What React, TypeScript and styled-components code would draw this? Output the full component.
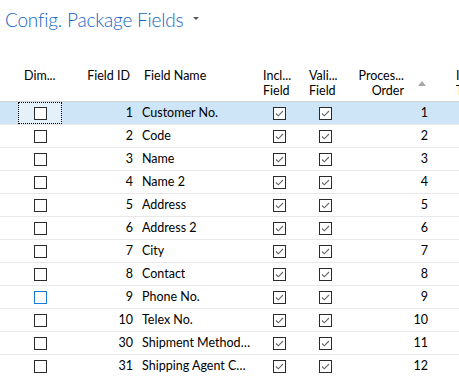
import React from 'react';
import styled, { createGlobalStyle } from 'styled-components';

const GlobalStyle = createGlobalStyle`
  body {
    margin: 0;
    background: #ffffff;
    font-family: 'Segoe UI', Lato, 'Noto Sans', sans-serif;
    color: #000;
  }
`;

const rows = [
  { id: 1, name: 'Customer No.', order: 1 },
  { id: 2, name: 'Code', order: 2 },
  { id: 3, name: 'Name', order: 3 },
  { id: 4, name: 'Name 2', order: 4 },
  { id: 5, name: 'Address', order: 5 },
  { id: 6, name: 'Address 2', order: 6 },
  { id: 7, name: 'City', order: 7 },
  { id: 8, name: 'Contact', order: 8 },
  { id: 9, name: 'Phone No.', order: 9 },
  { id: 10, name: 'Telex No.', order: 10 },
  { id: 30, name: 'Shipment Method Code', order: 11 },
  { id: 31, name: 'Shipping Agent Code', order: 12 },
];

const COLS = '18px 44px 73px 122px 45px 46px 87px 1fr';

const Page = styled.div`
  width: 459px;
  height: 376px;
  overflow: hidden;
`;

const TitleBar = styled.div`
  display: flex;
  align-items: center;
  gap: 10px;
  padding: 4px 0 0 5px;
  height: 30px;
`;

const Title = styled.h1`
  margin: 0;
  font-size: 19px;
  font-weight: 300;
  color: #1466c2;
  letter-spacing: -0.2px;
`;

const Caret = styled.span`
  width: 0;
  height: 0;
  margin-top: -2px;
  border-left: 3px solid transparent;
  border-right: 3px solid transparent;
  border-top: 3px solid #555;
`;

const Grid = styled.div`
  margin-top: 31px;
`;

const HeaderRow = styled.div`
  display: grid;
  grid-template-columns: ${COLS};
  height: 36px;
  border-bottom: 1px solid #d2d2d2;
  font-size: 12.5px;
  line-height: 15px;
`;

const HeadCell = styled.div<{ $align?: 'left' | 'right' }>`
  padding: 3px 6px 0 6px;
  text-align: ${(p) => p.$align || 'left'};
  white-space: nowrap;
  overflow: hidden;
`;

const SortHead = styled.div`
  display: flex;
  justify-content: flex-end;
  padding: 3px 9px 0 0;
  gap: 14px;
`;

const SortText = styled.div`
  text-align: right;
`;

const SortArrow = styled.span`
  margin-top: 13px;
  width: 0;
  height: 0;
  border-left: 4.5px solid transparent;
  border-right: 4.5px solid transparent;
  border-bottom: 5px solid #a6a6a6;
`;

const Row = styled.div<{ $selected?: boolean }>`
  display: grid;
  grid-template-columns: ${COLS};
  height: 22px;
  border-bottom: 1px solid #e8e8e8;
  background: ${(p) => (p.$selected ? '#cde5f7' : '#fff')};
  font-size: 12.5px;
  line-height: 22px;
`;

const Cell = styled.div<{ $align?: 'left' | 'right' | 'center'; $focus?: boolean }>`
  display: flex;
  align-items: center;
  justify-content: ${(p) =>
    p.$align === 'right' ? 'flex-end' : p.$align === 'center' ? 'center' : 'flex-start'};
  padding: 0 6px;
  white-space: nowrap;
  overflow: hidden;
  min-width: 0;
  ${(p) =>
    p.$focus &&
    `
    background: #e4f1fb;
    outline: 1px dotted #000;
    outline-offset: -1px;
  `}
`;

const Ellipsis = styled.span`
  overflow: hidden;
  text-overflow: ellipsis;
  white-space: nowrap;
`;

const Box = styled.span<{ $hover?: boolean }>`
  display: inline-flex;
  align-items: center;
  justify-content: center;
  box-sizing: border-box;
  width: 13px;
  height: 13px;
  border: 1px solid ${(p) => (p.$hover ? '#1a7ad4' : '#2b2b2b')};
  background: #fff;
`;

const Check = ({ checked, hover }: { checked?: boolean; hover?: boolean }) => (
  <Box $hover={hover}>
    {checked && (
      <svg width="11" height="11" viewBox="0 0 11 11">
        <path d="M2 5.5 L4.3 7.8 L9 3" fill="none" stroke="#666" strokeWidth="1.1" />
      </svg>
    )}
  </Box>
);

export default function App() {
  return (
    <Page>
      <GlobalStyle />
      <TitleBar>
        <Title>Config. Package Fields</Title>
        <Caret />
      </TitleBar>
      <Grid>
        <HeaderRow>
          <div />
          <HeadCell>Dim...</HeadCell>
          <HeadCell $align="right" style={{ paddingRight: 5 }}>Field ID</HeadCell>
          <HeadCell style={{ paddingLeft: 9 }}>Field Name</HeadCell>
          <HeadCell>
            Incl...
            <br />
            Field
          </HeadCell>
          <HeadCell style={{ paddingLeft: 7 }}>
            Vali...
            <br />
            Field
          </HeadCell>
          <SortHead>
            <SortText>
              Proces...
              <br />
              Order
            </SortText>
            <SortArrow />
          </SortHead>
          <HeadCell style={{ paddingLeft: 21 }}>
            In...
            <br />
            To...
          </HeadCell>
        </HeaderRow>
        {rows.map((r, i) => (
          <Row key={r.id} $selected={i === 0}>
            <div />
            <Cell $align="center" $focus={i === 0}>
              <Check hover={r.id === 9} />
            </Cell>
            <Cell $align="right" style={{ paddingRight: 2 }}>{r.id}</Cell>
            <Cell style={{ paddingLeft: 7 }}>
              <Ellipsis>{r.name}</Ellipsis>
            </Cell>
            <Cell $align="center">
              <Check checked />
            </Cell>
            <Cell $align="center">
              <Check checked />
            </Cell>
            <Cell $align="right" style={{ paddingRight: 7 }}>{r.order}</Cell>
            <div />
          </Row>
        ))}
      </Grid>
    </Page>
  );
}
